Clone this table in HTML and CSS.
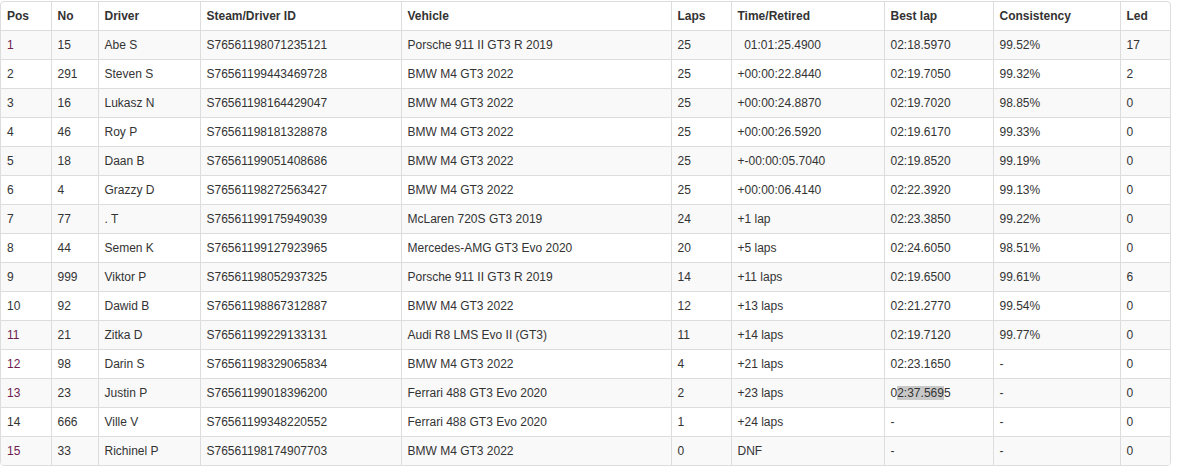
FILE: index.html
```html
<!DOCTYPE html>
<html>
<head>
<meta charset="utf-8">
<link rel="stylesheet" href="styles.css">
</head>
<body>
<div class="wrap">
<table class="results">
<colgroup>
<col class="c-pos"><col class="c-no"><col class="c-driver"><col class="c-id"><col class="c-veh"><col class="c-laps"><col class="c-time"><col class="c-best"><col class="c-cons"><col class="c-led">
</colgroup>
<thead>
<tr><th>Pos</th><th>No</th><th>Driver</th><th>Steam/Driver ID</th><th>Vehicle</th><th>Laps</th><th>Time/Retired</th><th>Best lap</th><th>Consistency</th><th>Led</th></tr>
</thead>
<tbody>
<tr><td class="v">1</td><td>15</td><td>Abe S</td><td>S76561198071235121</td><td>Porsche 911 II GT3 R 2019</td><td>25</td><td>&nbsp;&nbsp;01:01:25.4900</td><td>02:18.5970</td><td>99.52%</td><td>17</td></tr>
<tr><td>2</td><td>291</td><td>Steven S</td><td>S76561199443469728</td><td>BMW M4 GT3 2022</td><td>25</td><td>+00:00:22.8440</td><td>02:19.7050</td><td>99.32%</td><td>2</td></tr>
<tr><td>3</td><td>16</td><td>Lukasz N</td><td>S76561198164429047</td><td>BMW M4 GT3 2022</td><td>25</td><td>+00:00:24.8870</td><td>02:19.7020</td><td>98.85%</td><td>0</td></tr>
<tr><td>4</td><td>46</td><td>Roy P</td><td>S76561198181328878</td><td>BMW M4 GT3 2022</td><td>25</td><td>+00:00:26.5920</td><td>02:19.6170</td><td>99.33%</td><td>0</td></tr>
<tr><td>5</td><td>18</td><td>Daan B</td><td>S76561199051408686</td><td>BMW M4 GT3 2022</td><td>25</td><td>+-00:00:05.7040</td><td>02:19.8520</td><td>99.19%</td><td>0</td></tr>
<tr><td>6</td><td>4</td><td>Grazzy D</td><td>S76561198272563427</td><td>BMW M4 GT3 2022</td><td>25</td><td>+00:00:06.4140</td><td>02:22.3920</td><td>99.13%</td><td>0</td></tr>
<tr><td>7</td><td>77</td><td>. T</td><td>S76561199175949039</td><td>McLaren 720S GT3 2019</td><td>24</td><td>+1 lap</td><td>02:23.3850</td><td>99.22%</td><td>0</td></tr>
<tr><td>8</td><td>44</td><td>Semen K</td><td>S76561199127923965</td><td>Mercedes-AMG GT3 Evo 2020</td><td>20</td><td>+5 laps</td><td>02:24.6050</td><td>98.51%</td><td>0</td></tr>
<tr><td>9</td><td>999</td><td>Viktor P</td><td>S76561198052937325</td><td>Porsche 911 II GT3 R 2019</td><td>14</td><td>+11 laps</td><td>02:19.6500</td><td>99.61%</td><td>6</td></tr>
<tr><td>10</td><td>92</td><td>Dawid B</td><td>S76561198867312887</td><td>BMW M4 GT3 2022</td><td>12</td><td>+13 laps</td><td>02:21.2770</td><td>99.54%</td><td>0</td></tr>
<tr><td class="v">11</td><td>21</td><td>Zitka D</td><td>S76561199229133131</td><td>Audi R8 LMS Evo II (GT3)</td><td>11</td><td>+14 laps</td><td>02:19.7120</td><td>99.77%</td><td>0</td></tr>
<tr><td class="v">12</td><td>98</td><td>Darin S</td><td>S76561198329065834</td><td>BMW M4 GT3 2022</td><td>4</td><td>+21 laps</td><td>02:23.1650</td><td>-</td><td>0</td></tr>
<tr><td class="v">13</td><td>23</td><td>Justin P</td><td>S76561199018396200</td><td>Ferrari 488 GT3 Evo 2020</td><td>2</td><td>+23 laps</td><td>0<span class="sel">2:37.569</span>5</td><td>-</td><td>0</td></tr>
<tr><td>14</td><td>666</td><td>Ville V</td><td>S76561199348220552</td><td>Ferrari 488 GT3 Evo 2020</td><td>1</td><td>+24 laps</td><td>-</td><td>-</td><td>0</td></tr>
<tr><td class="v">15</td><td>33</td><td>Richinel P</td><td>S76561198174907703</td><td>BMW M4 GT3 2022</td><td>0</td><td>DNF</td><td>-</td><td>-</td><td>0</td></tr>
</tbody>
</table>
</div>
</body>
</html>
```
FILE: styles.css
```css
html, body {
  margin: 0;
  padding: 0;
  background: #fff;
}
body {
  font-family: "Liberation Sans", Arial, sans-serif;
  font-size: 12px;
  color: #333;
  padding-top: 1px;
}
.wrap {
  width: 1169px;
  border: 1px solid #ddd;
  border-radius: 4px;
  overflow: hidden;
}
.results {
  width: 100%;
  border-collapse: collapse;
  table-layout: fixed;
}
.c-pos { width: 50px; }
.c-no { width: 47px; }
.c-driver { width: 102px; }
.c-id { width: 201px; }
.c-veh { width: 270px; }
.c-laps { width: 60px; }
.c-time { width: 153px; }
.c-best { width: 109px; }
.c-cons { width: 127px; }
.c-led { width: 50px; }
.results th,
.results td {
  padding: 5px 6px;
  line-height: 18px;
  text-align: left;
  white-space: nowrap;
  border-left: 1px solid #ddd;
}
.results th:first-child,
.results td:first-child {
  border-left: none;
}
.results th {
  font-weight: bold;
  border-bottom: 1px solid #ddd;
}
.results tbody tr + tr td {
  border-top: 1px solid #ddd;
}
.results tbody tr:nth-child(odd) {
  background: #f9f9f9;
}
.v {
  color: #6e2050;
}
.sel {
  background: #c8c8c8;
}
```
